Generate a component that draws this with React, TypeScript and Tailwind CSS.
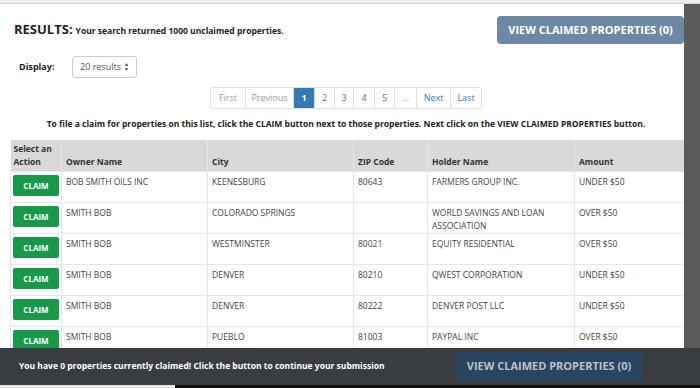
import React from 'react';

const rows = [
  { owner: 'BOB SMITH OILS INC', city: 'KEENESBURG', zip: '80643', holder: 'FARMERS GROUP INC.', amount: 'UNDER $50' },
  { owner: 'SMITH BOB', city: 'COLORADO SPRINGS', zip: '', holder: 'WORLD SAVINGS AND LOAN ASSOCIATION', amount: 'OVER $50' },
  { owner: 'SMITH BOB', city: 'WESTMINSTER', zip: '80021', holder: 'EQUITY RESIDENTIAL', amount: 'OVER $50' },
  { owner: 'SMITH BOB', city: 'DENVER', zip: '80210', holder: 'QWEST CORPORATION', amount: 'UNDER $50' },
  { owner: 'SMITH BOB', city: 'DENVER', zip: '80222', holder: 'DENVER POST LLC', amount: 'UNDER $50' },
  { owner: 'SMITH BOB', city: 'PUEBLO', zip: '81003', holder: 'PAYPAL INC', amount: 'OVER $50' },
];

const pages = [
  { label: 'First', w: 'w-[34px]', muted: true },
  { label: 'Previous', w: 'w-[48px]', muted: true },
  { label: '1', w: 'w-[21px]', active: true },
  { label: '2', w: 'w-[20px]' },
  { label: '3', w: 'w-[19px]' },
  { label: '4', w: 'w-[21px]' },
  { label: '5', w: 'w-[20px]' },
  { label: '...', w: 'w-[22px]', muted: true },
  { label: 'Next', w: 'w-[34px]' },
  { label: 'Last', w: 'w-[31px]' },
];

export default function App() {
  return (
    <div className="relative h-[388px] w-[700px] overflow-hidden bg-white font-['Open_Sans',sans-serif] text-[#333]">
      <div className="h-[4px] border-b border-[#d6d6d6] bg-[#ececec]" />
      <div className="flex h-[384px]">
        <div className="flex-1 overflow-hidden">
          <div className="flex items-start justify-between pl-[14px] pt-[12px]">
            <div className="mt-[7px] flex items-baseline gap-[3px]">
              <span className="text-[13px] font-bold leading-none text-[#222]">RESULTS:</span>
              <span className="text-[8.5px] font-bold text-[#222]">Your search returned 1000 unclaimed properties.</span>
            </div>
            <button className="h-[28px] w-[187px] rounded-[4px] bg-[#6d88a4] text-[11px] font-bold text-white">
              VIEW CLAIMED PROPERTIES (0)
            </button>
          </div>

          <div className="mt-[12px] flex items-center pl-[19px]">
            <span className="w-[53px] text-[9px] font-bold text-[#222]">Display:</span>
            <div className="flex h-[22px] w-[65px] items-center justify-between rounded-[3px] border border-[#ccc] px-[7px] text-[9px] text-[#555]">
              <span>20 results</span>
              <span className="flex flex-col text-[5px] leading-[5px] text-[#444]">
                <span>▲</span>
                <span>▼</span>
              </span>
            </div>
          </div>

          <div className="mt-[9px] flex justify-center pl-[8px]">
            <div className="flex h-[22px] overflow-hidden rounded-[3px] border border-[#ddd] text-[9px]">
              {pages.map((p, i) => (
                <div
                  key={p.label}
                  className={
                    'flex items-center justify-center border-[#ddd] ' +
                    p.w +
                    (i > 0 ? ' border-l' : '') +
                    (p.active ? ' bg-[#337ab7] font-bold text-white' : p.muted ? ' text-[#999]' : ' text-[#337ab7]')
                  }
                >
                  {p.label}
                </div>
              ))}
            </div>
          </div>

          <p className="mt-[9px] pl-[8px] text-center text-[8.5px] font-bold text-[#222]">
            To file a claim for properties on this list, click the CLAIM button next to those properties. Next click on the VIEW CLAIMED PROPERTIES button.
          </p>

          <table className="ml-[10px] mt-[9px] w-[675px] table-fixed border-collapse text-[8.5px]">
            <colgroup>
              <col className="w-[51px]" />
              <col className="w-[146px]" />
              <col className="w-[146px]" />
              <col className="w-[74px]" />
              <col className="w-[147px]" />
              <col className="w-[111px]" />
            </colgroup>
            <thead>
              <tr className="h-[32px] bg-[#d9d9d9] text-left font-bold text-[#333]">
                <th className="border-r border-[#e8e8e8] px-[3px] pb-[3px] align-bottom leading-[13px]">Select an Action</th>
                <th className="border-r border-[#e8e8e8] px-[4px] pb-[3px] align-bottom">Owner Name</th>
                <th className="border-r border-[#e8e8e8] px-[4px] pb-[3px] align-bottom">City</th>
                <th className="border-r border-[#e8e8e8] px-[4px] pb-[3px] align-bottom">ZIP Code</th>
                <th className="border-r border-[#e8e8e8] px-[4px] pb-[3px] align-bottom">Holder Name</th>
                <th className="px-[4px] pb-[3px] align-bottom">Amount</th>
              </tr>
            </thead>
            <tbody>
              {rows.map((r, i) => (
                <tr key={i} className="h-[31px] text-[#444]">
                  <td className="border border-[#e3e6ea] px-[2px] py-[3px] align-top">
                    <button className="h-[21px] w-[46px] rounded-[2px] bg-[#18994a] text-[8px] font-bold text-white">CLAIM</button>
                  </td>
                  <td className="border border-[#e3e6ea] px-[4px] pt-[3px] align-top leading-[13px]">{r.owner}</td>
                  <td className="border border-[#e3e6ea] px-[4px] pt-[3px] align-top leading-[13px]">{r.city}</td>
                  <td className="border border-[#e3e6ea] px-[4px] pt-[3px] align-top leading-[13px]">{r.zip}</td>
                  <td className="border border-[#e3e6ea] px-[4px] pt-[3px] align-top leading-[13px]">{r.holder}</td>
                  <td className="border border-[#e3e6ea] px-[4px] pt-[3px] align-top leading-[13px]">{r.amount}</td>
                </tr>
              ))}
            </tbody>
          </table>
        </div>
        <div className="w-[16px] bg-[#5b5b5b]" />
      </div>

      <div className="absolute bottom-[3px] left-0 right-0 flex h-[37px] items-center bg-[#393c41]">
        <span className="ml-[19px] w-[437px] text-[8.5px] font-bold text-white">
          You have 0 properties currently claimed! Click the button to continue your submission
        </span>
        <button className="h-[29px] w-[186px] rounded-[3px] bg-[#2a4561] text-[11px] font-bold text-[#b9c2cc]">
          VIEW CLAIMED PROPERTIES (0)
        </button>
      </div>
      <div className="absolute bottom-0 left-0 right-0 flex h-[3px] bg-[#111]">
        <div className="w-[175px] bg-[#e8e8e8]" />
      </div>
    </div>
  );
}
